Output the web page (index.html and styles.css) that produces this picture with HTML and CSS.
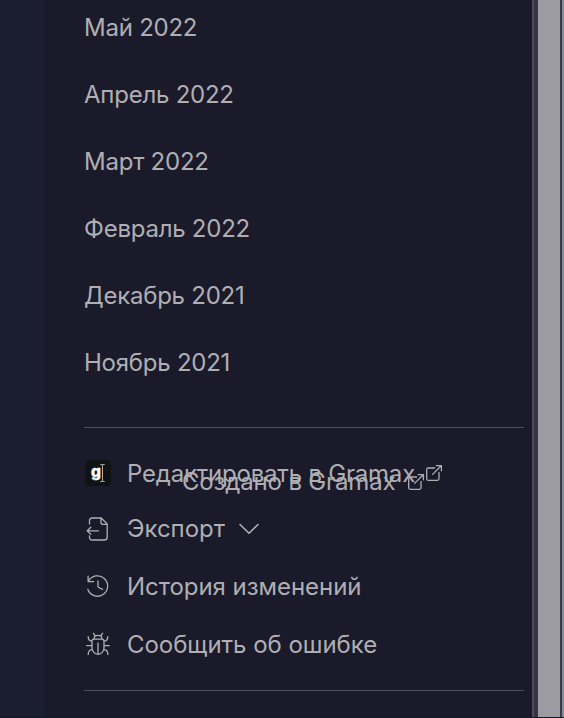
FILE: index.html
```html
<!DOCTYPE html>
<html lang="ru">
<head>
<meta charset="utf-8">
<title>Gramax</title>
<link rel="stylesheet" href="styles.css">
</head>
<body>
<div class="shell">
  <div class="gutter"></div>
  <aside class="sidebar">
    <nav class="months">
      <a class="month">Май 2022</a>
      <a class="month">Апрель 2022</a>
      <a class="month">Март 2022</a>
      <a class="month">Февраль 2022</a>
      <a class="month">Декабрь 2021</a>
      <a class="month">Ноябрь 2021</a>
    </nav>
    <div class="actions">
      <a class="action first">
        <svg class="logo" viewBox="0 0 26 26"><rect width="26" height="26" rx="4.5" fill="#111214"/><text x="6" y="16.8" class="logo-letter">g</text><path d="M15.7 4.5h1.2q.6 0 .6.6v15.8q0 .6-.6.6h-1.2M19.3 4.5h-1.2q-.6 0-.6.6M17.5 20.9q0 .6.6.6h1.2" fill="none" stroke="#c4c4c8" stroke-width=".9"/></svg>
        <span class="edit">Редактировать в Gramax</span>
        <svg class="ext" viewBox="0 0 16 16"><path d="M8.6 3H2.2Q.7 3 .7 4.5v9.3q0 1.5 1.5 1.5h9.3q1.5 0 1.5-1.5V7.4M10.2.6h5.2v5.2M15.2.8 6.6 9.4"/></svg>
      </a>
      <a class="action">
        <svg class="icon" viewBox="0 0 26 26"><path d="M4.5 8V4.8Q4.5 2 7.3 2h8.9l6 6v13.2q0 2.8-2.8 2.8H7.3q-2.8 0-2.8-2.8V20M15.9 2v4.3q0 2 2 2h4.3M13.5 14.8H2.2M5.8 11.2 2.2 14.8l3.6 3.6"/></svg>
        <span>Экспорт</span>
        <svg class="chevron" viewBox="0 0 20 12"><path d="m1 1.5 9 8.8 9-8.8"/></svg>
      </a>
      <a class="action">
        <svg class="icon" viewBox="0 0 26 26"><path d="M3.1 2.2v5.4h5.6M3.4 7.3a10.2 10.2 0 1 1-.6 8M13 7v6l4.5 2.4"/></svg>
        <span>История изменений</span>
      </a>
      <a class="action">
        <svg class="icon" viewBox="0 0 26 26"><path transform="translate(0 -.9)" d="M7 10.2q0-2.2 2.2-2.2h7.6q2.2 0 2.2 2.2v6.5a6 6.5 0 0 1-12 0zM9.2 8V6.8q0-2.6 3.8-2.6t3.8 2.6V8M10.2 4.8 8.5 2.2M15.8 4.8l1.7-2.6M13 12v11.2M7 14.5H1.7M19 14.5h5.3M7.2 10.2Q3.2 10 3.2 5.5M18.8 10.2q4 -.2 4-4.7M7.4 18.6q-4.2 0-4.2 4.7M18.6 18.6q4.2 0 4.2 4.7"/></svg>
        <span>Сообщить об ошибке</span>
      </a>
    </div>
    <div class="credit"><span>Создано в Gramax</span><svg class="ext" viewBox="0 0 16 16"><path d="M8.6 3H2.2Q.7 3 .7 4.5v9.3q0 1.5 1.5 1.5h9.3q1.5 0 1.5-1.5V7.4M10.2.6h5.2v5.2M15.2.8 6.6 9.4"/></svg></div>
  </aside>
  <div class="edge"></div>
  <div class="track"></div>
  <div class="outer"></div>
</div>
</body>
</html>
```
FILE: styles.css
```css
* { box-sizing: border-box; }
body { margin: 0; background: #1a1a2b; color: #afafb3; font: 24px/30px Inter, "Liberation Sans", sans-serif; overflow: hidden; }
.shell { display: flex; width: 564px; height: 718px; border-bottom: 1px solid #17152a; }
.gutter { width: 44px; background: #1b1d30; }
.sidebar { position: relative; width: 488px; padding: 0 8px 0 40px; }
.edge { width: 6px; background: #343646; border-left: 2px solid #4d4d5c; }
.track { width: 22px; background: #9b9ba1; }
.outer { width: 4px; background: #8b8b94; border-left: 2px solid #3a3c50; }
.months { height: 427px; overflow: hidden; }
.month { display: flex; align-items: center; height: 67px; white-space: nowrap; letter-spacing: -.24px; }
.month:first-child { height: 61px; padding-bottom: 6px; }
.actions { height: 264px; border-top: 1px solid #4e4d5c; border-bottom: 1px solid #4e4d5c; padding-top: 18px; }
.action { display: flex; align-items: center; height: 58px; white-space: nowrap; letter-spacing: -.04px; }
.action.first { height: 54px; }
.action > span { margin-left: 16px; }
.action > .edit { letter-spacing: -.21px; padding-top: 2px; }
svg { display: block; flex: none; fill: none; stroke: currentColor; stroke-width: 1.3; stroke-linecap: round; stroke-linejoin: round; overflow: visible; }
.icon, .logo { width: 26px; height: 26px; margin-left: 1px; }
.logo { stroke: none; }
.logo-letter { font: 800 15.5px Inter, sans-serif; fill: #fff; stroke: #fff; stroke-width: .4px; }
.ext { width: 16px; height: 16px; }
.action .ext { margin-left: 10.5px; }
.chevron { width: 20px; height: 12px; margin-left: 14px; stroke-width: 1.6; }
.credit { position: absolute; left: 138px; top: 467px; display: flex; align-items: center; white-space: nowrap; letter-spacing: -.16px; }
.credit .ext { margin: -1px 0 0 13px; }
```
